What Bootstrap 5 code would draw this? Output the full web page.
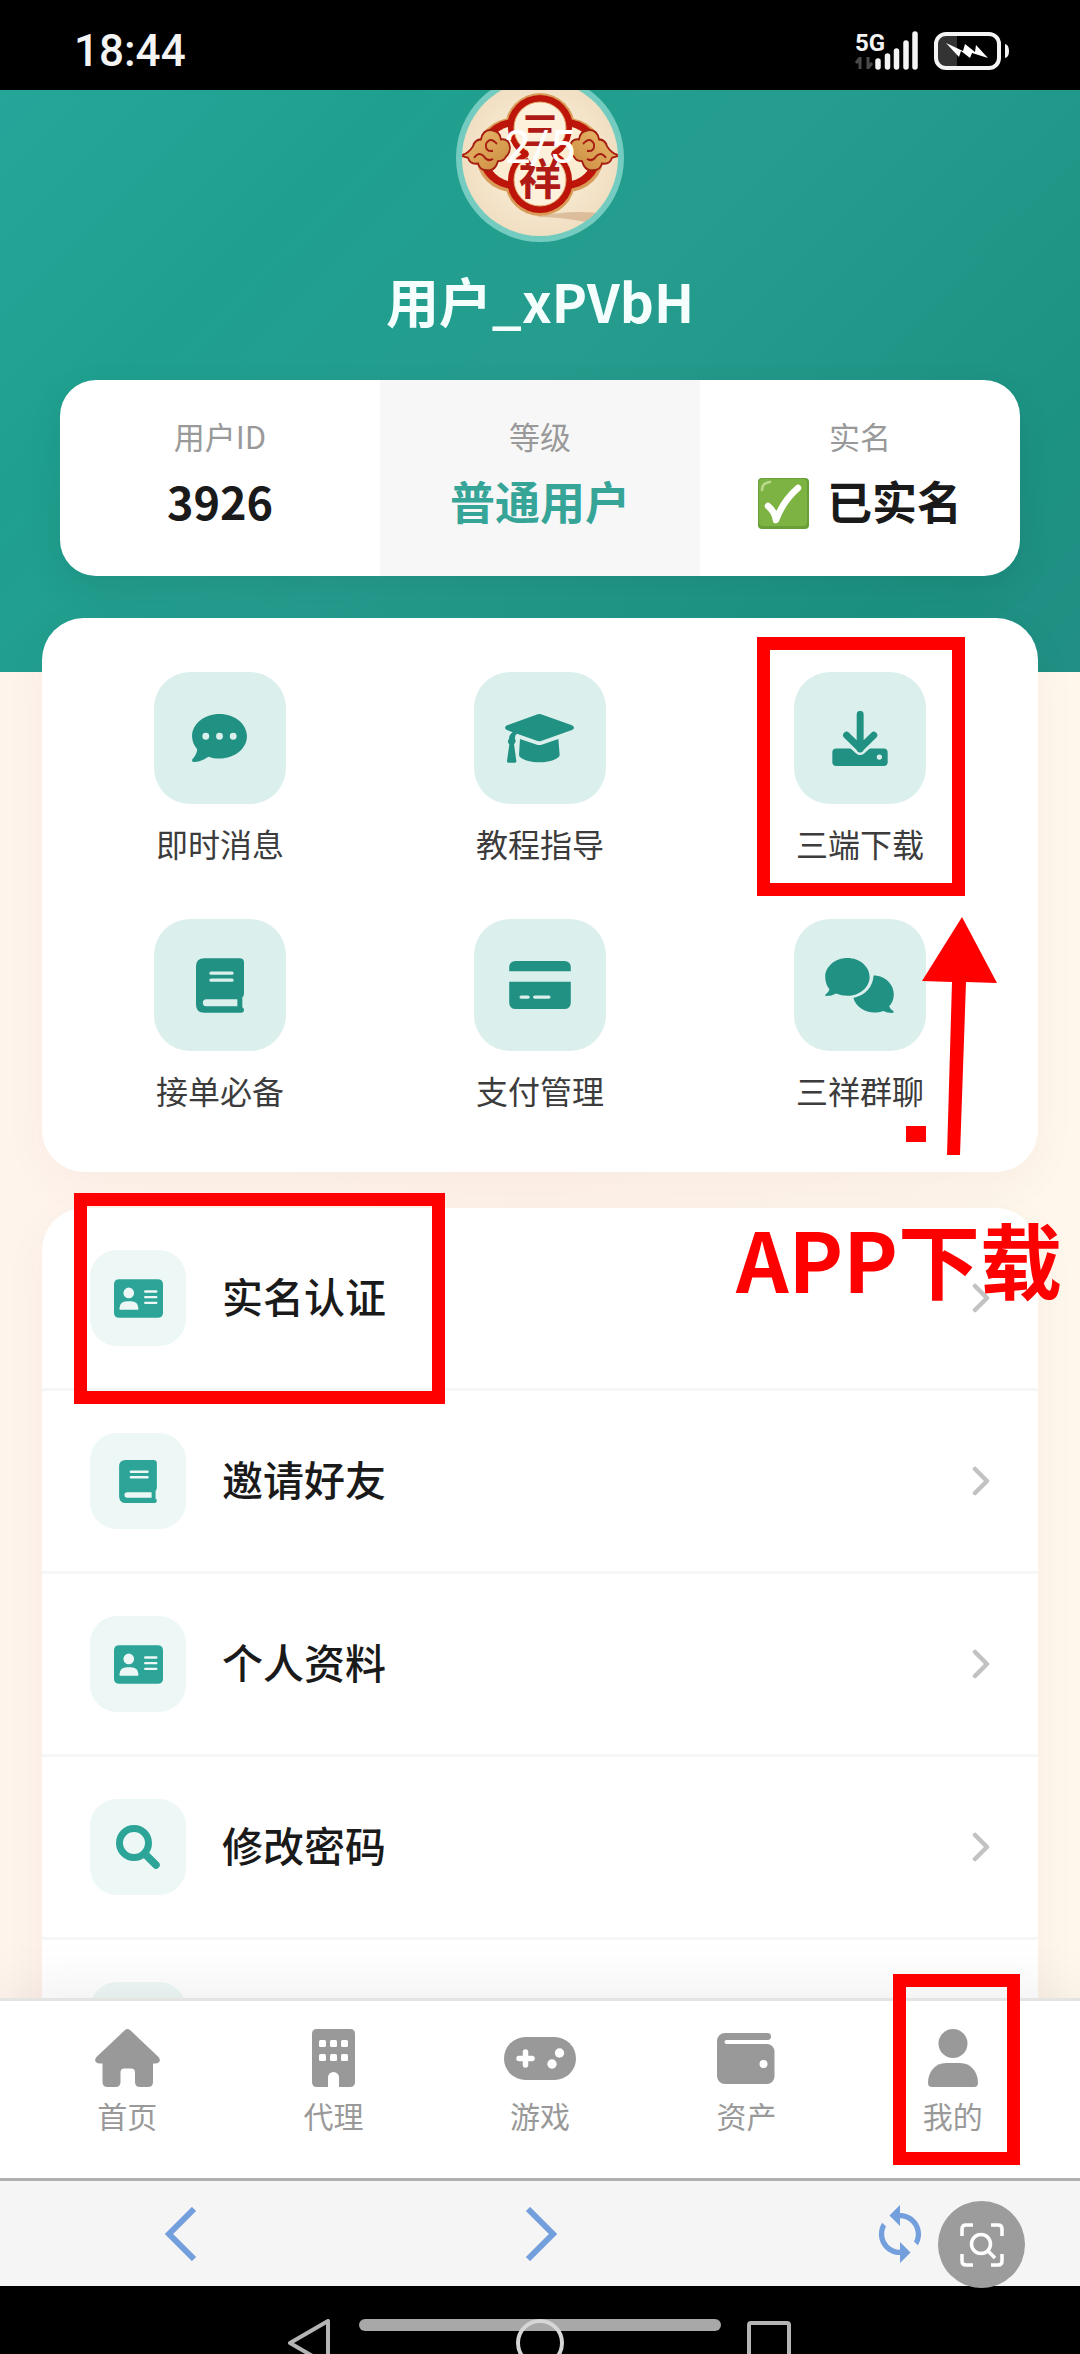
<!DOCTYPE html>
<html lang="zh-CN">
<head>
<meta charset="utf-8">
<meta name="viewport" content="width=device-width, initial-scale=1">
<title>我的</title>
<link href="https://cdn.jsdelivr.net/npm/bootstrap@5.3.0/dist/css/bootstrap.min.css" rel="stylesheet">
<style>
  body { font-family: "Noto Sans CJK SC", "Noto Sans", sans-serif; background: #000; color: #1a1a1a; }
  a, a:hover { color: inherit; text-decoration: none; }
  svg { display: block; flex: none; }
  .phone { height: 100vh; }

  /* status bar */
  .status { height: 90px; background: #000; color: #f4f4f4; padding: 12px 71px 0 74px; z-index: 3; }
  .clock { font: 500 44px/48px Roboto, sans-serif; }

  /* scrolling page */
  .view { min-height: 0; overflow: hidden; background: linear-gradient(90deg, #fff4ec, #fff2e9 50%, #fff7ec); }
  .hero { background: linear-gradient(135deg, #26a69a 0%, #1fa08f 25%, #259c8e 50%, #1c9283 85%, #228f84 100%); padding: 0 60px 96px; }
  .avatar { width: 168px; height: 168px; margin-top: -16px; border-radius: 50%; }
  .page-no { top: 43px; left: 0; right: 0; font: 400 46px/60px Roboto, sans-serif; color: #fff; }
  .user-name { font-size: 53px; line-height: 60px; margin: 28px 0 50px; color: #f4fffd; font-weight: 700; }
  .stats { border-radius: 36px; height: 196px; box-shadow: 0 12px 36px rgba(0, 0, 0, .08); }
  .stat { flex: 1 1 0; padding-top: 34px; }
  .stat-mid { background: #f7f7f7; }
  .stat-label { font-size: 31px; line-height: 44px; color: #999; }
  .stat-value { font-size: 45px; line-height: 60px; margin-top: 13px; font-weight: 700; gap: 18px; }
  .stat-check { margin-top: 4px; }
  .teal-text { color: #36a497; }

  .panel { margin: 0 42px; border-radius: 42px; box-shadow: 0 12px 48px rgba(80, 30, 20, .04); }
  .menu { margin-top: -54px; padding: 54px 18px 62px; row-gap: 56px; }
  .menu-item { width: 33.3333%; color: #3c3c3c; }
  .menu-tile { width: 132px; height: 132px; border-radius: 36px; background: #dbefec; color: #219184; }
  .menu-label { font-size: 32px; line-height: 40px; margin-top: 19px; }

  .rows { margin-top: 36px; }
  .row-link { height: 183px; border-bottom: 3px solid #f5f6f6; padding: 0 48px; }
  .row-tile { width: 96px; height: 96px; border-radius: 27px; background: #edf8f6; color: #2ca498; }
  .row-text { font-size: 41px; line-height: 60px; font-weight: 500; margin-left: 36px; padding-bottom: 6px; }

  /* bottom tabs */
  .tabs { background: #fff; border-top: 3px solid #e4e4e2; padding: 27px 24px 45px; box-shadow: 0 -6px 60px rgba(0, 0, 0, .07); z-index: 2; color: #999; }
  .tab-item { flex: 1 1 0; }
  .tab-icon { height: 60px; }
  .tab-label { font-size: 30px; line-height: 36px; margin-top: 9px; }

  /* browser and system bars */
  .browser { height: 108px; background: #f5f5f5; border-top: 3px solid #b0b0b0; z-index: 3; }
  .browser button { flex: 1 1 0; border: 0; background: none; padding: 0; color: #749fdd; }
  .browser .lens { width: 87px; height: 87px; right: 55px; top: 20px; border-radius: 50%; background: #9c9c9c; }
  .system { height: 68px; background: #000; overflow: hidden; padding-top: 33px; gap: 183px; }
  .pill { width: 362px; height: 12px; border-radius: 6px; background: #a8a8a8; top: 33px; left: 50%; margin-left: -181px; }

  /* red pen marks */
  .pen-box { border: 13px solid #f00; pointer-events: none; z-index: 4; }
  .pen-download { left: 50%; margin-left: -103px; top: -35px; width: 208px; height: 259px; }
  .pen-verify { left: 32px; top: -15px; width: 371px; height: 211px; }
  .pen-mine { left: 50%; margin-left: -60px; top: -54px; width: 127px; height: 191px; }
  .pen-arrow { right: 40px; top: 298px; z-index: 4; }
  .pen-text { right: -24px; top: 2px; font-size: 82px; line-height: 96px; font-weight: 700; color: #f00; z-index: 4; }
</style>
<script src="https://cdn.jsdelivr.net/npm/bootstrap@5.3.0/dist/js/bootstrap.bundle.min.js"></script>
</head>
<body>
<svg width="0" height="0" class="position-absolute" aria-hidden="true">
  <symbol id="book" viewBox="0 0 144 164"><path fill="currentColor" fill-rule="evenodd" d="M25 0h106q13 0 13 13v92q0 9-5 12v30q5 3 5 8q0 9-9 9H25q-25 0-25-25V25Q0 0 25 0zM45 40a5 5 0 0 0 0 10h63a5 5 0 0 0 0-10zM45 61a5 5 0 0 0 0 10h63a5 5 0 0 0 0-10zM31 123a10.500 10.500 0 0 0 0 21h93v-21z"/></symbol>
  <symbol id="idcard" viewBox="0 0 146 115"><path fill="currentColor" fill-rule="evenodd" d="M16 0h114q16 0 16 16v83q0 16-16 16H16q-16 0-16-16V16Q0 0 16 0zM44 25a16 16 0 1 0 0 32a16 16 0 1 0 0-32zM16 88q0 3 3 3h51q3 0 3-3q-1-22-23-22H39q-22 0-23 22zM93 33a3.500 3.500 0 0 0 0 7h33a3.500 3.500 0 0 0 0-7zM93 50a3.500 3.500 0 0 0 0 7h33a3.500 3.500 0 0 0 0-7zM93 67a3.500 3.500 0 0 0 0 7h33a3.500 3.500 0 0 0 0-7z"/></symbol>
  <symbol id="chev" viewBox="0 0 18 30"><path d="M3 3l12 12L3 27" fill="none" stroke="#c2c2c2" stroke-width="4.500" stroke-linecap="round" stroke-linejoin="round"/></symbol>
</svg>

<div class="phone d-flex flex-column">
  <header class="status d-flex justify-content-between align-items-center position-relative flex-shrink-0">
    <span class="clock">18:44</span>
    <svg width="163" height="52" viewBox="846 25 163 52" role="img" aria-label="5G">
      <text x="855" y="51" font-family="Roboto, sans-serif" font-weight="700" font-size="24" fill="#f4f4f4">5G</text>
      <path d="M860 57v12M860 58l-4 5M868 57v12M868 68l4-5" stroke="#4a4a4a" stroke-width="3" fill="none"/>
      <path d="M878 61v6M887.500 56v11M896.500 51v16M906 43v24M915 34v33" stroke="#f4f4f4" stroke-width="5.500" stroke-linecap="round"/>
      <path d="M946 34h11v34h-11q-10 0-10-10v-14q0-10 10-10z" fill="#333"/>
      <rect x="936" y="34" width="63" height="34" rx="10" fill="none" stroke="#f4f4f4" stroke-width="4"/>
      <path d="M1005 44q4 1 4 7t-4 7z" fill="#f4f4f4"/>
      <path d="M946 43l17 8 2-7 10 8 1-7 12 13-16-5-2 5-9-7-2 6z" fill="#fff"/>
    </svg>
  </header>

  <main class="view flex-fill">
    <section class="hero text-center">
      <div class="avatar position-relative mx-auto">
        <svg width="168" height="168" viewBox="0 0 168 168" role="img" aria-label="三祥">
          <defs>
            <radialGradient id="cream"><stop offset="0" stop-color="#fdf3df"/><stop offset="1" stop-color="#f1dfc2"/></radialGradient>
            <linearGradient id="gold" x2="1" y2="1"><stop offset="0" stop-color="#eebd72"/><stop offset="1" stop-color="#c98a3d"/></linearGradient>
            <clipPath id="face"><circle cx="84" cy="84" r="78"/></clipPath>
          </defs>
          <circle cx="84" cy="84" r="84" fill="#74cbc0"/>
          <circle cx="84" cy="84" r="78" fill="url(#cream)"/>
          <g clip-path="url(#face)">
            <path d="M80 143q35-8 70-3l-20 8q-25-5-50-5z" fill="#c9a079" opacity=".55"/>
            <g fill="#d99c58"><circle cx="57" cy="81" r="37"/><circle cx="111" cy="81" r="37"/><circle cx="84" cy="54" r="35"/><circle cx="84" cy="107" r="35"/></g>
            <g fill="#bd1509"><circle cx="58" cy="80" r="35"/><circle cx="110" cy="80" r="35"/><circle cx="84" cy="54" r="33"/><circle cx="84" cy="106" r="33"/></g>
            <g fill="#fbecd2"><circle cx="59" cy="80" r="28"/><circle cx="109" cy="80" r="28"/></g>
            <g fill="#bd1509"><circle cx="84" cy="54" r="32"/><circle cx="84" cy="106" r="32"/></g>
            <g fill="#fdf1dc" stroke="#e0ad70" stroke-width="1"><circle cx="84" cy="54" r="26"/><circle cx="84" cy="106" r="26"/></g>
            <path d="M69 70h30l-4 10 4 10H69l4-10z" fill="#fdf1dc"/>
            <g id="cloud" transform="matrix(1 0 0 1.150 0 -14)" fill="url(#gold)" stroke="#a51c10" stroke-width="1.800">
              <path d="M4 83q8-1 13-8 2-6 8-6 2-9 11-8 8 1 9 8 8-1 9 7 0 5-4 8-2 4-8 4-3 9-11 8-7 0-9-6-8 1-10-5-4-1-8-2z"/>
              <path d="M41 73q-7-7-11 0-1 7 7 6M18 85q5-6 10-1 4 5 9 2" fill="none"/>
            </g>
            <use href="#cloud" transform="matrix(-1 0 0 1 168 0)"/>
            <g fill="#b01a16" font-family="Noto Sans CJK SC, sans-serif" font-weight="700" text-anchor="middle"><text x="84" y="70" font-size="38">三</text><text x="84" y="121" font-size="43">祥</text></g>
          </g>
        </svg>
        <span class="page-no position-absolute text-center">2/5</span>
      </div>
      <h1 class="user-name">用户_xPVbH</h1>
      <div class="stats d-flex bg-white overflow-hidden">
        <div class="stat"><div class="stat-label">用户ID</div><div class="stat-value">3926</div></div>
        <div class="stat stat-mid"><div class="stat-label">等级</div><div class="stat-value teal-text">普通用户</div></div>
        <div class="stat"><div class="stat-label">实名</div>
          <div class="stat-value d-flex justify-content-center align-items-center">
            <svg class="stat-check" width="51" height="51" viewBox="0 0 51 51" role="img" aria-label="✅"><rect width="51" height="51" rx="4" fill="#689f38"/><rect x="1" y="1" width="48" height="47" rx="4" fill="#7cb342"/><path d="M4 12q0-7 8-8" stroke="#b9d98f" stroke-width="2.500" fill="none" stroke-linecap="round"/><path d="M10 28q7 6 8 14Q25 23 40 10" fill="none" stroke="#fff" stroke-width="6.500" stroke-linecap="round" stroke-linejoin="round"/></svg>
            <span>已实名</span>
          </div></div>
      </div>
    </section>

    <nav class="panel menu bg-white d-flex flex-wrap position-relative">
      <a href="#" class="menu-item d-flex flex-column align-items-center">
        <span class="menu-tile d-flex align-items-center justify-content-center"><svg width="55" height="48" viewBox="0 32 512 448"><path fill="currentColor" fill-rule="evenodd" d="M256 448c141.400 0 256-93.100 256-208S397.400 32 256 32S0 125.100 0 240c0 45.100 17.700 86.800 47.700 120.900c-1.900 24.500-11.400 46.300-21.400 62.900c-5.500 9.200-11.100 16.600-15.200 21.600c-2.100 2.500-4 4.700-6.500 7.400c-4.600 4.600-5.900 11.400-3.400 17.400c2.500 6 8.300 9.900 14.800 9.900c28.700 0 57.600-8.900 81.600-19.300c22.900-10 42.400-21.900 54.300-30.600c31.800 11.500 67 17.900 104.100 17.900zM128 208a32 32 0 1 1 0 64a32 32 0 1 1 0-64zM256 208a32 32 0 1 1 0 64a32 32 0 1 1 0-64zM384 208a32 32 0 1 1 0 64a32 32 0 1 1 0-64z"/></svg></span>
        <span class="menu-label">即时消息</span>
      </a>
      <a href="#" class="menu-item d-flex flex-column align-items-center">
        <span class="menu-tile d-flex align-items-center justify-content-center"><svg width="69" height="49" viewBox="0 0 207 147" fill="currentColor"><path d="M98 1q5-2 10 0l93 33q12 7 0 14l-93 33q-5 2-10 0L36 59Q29 63 30 74q5 9-3 17l7 50q1 5-4 5H10q-5 0-4-5l7-50q-8-8-1-17Q13 61 23 55L6 48q-12-7 0-14z"/><path d="M45 75l51 17q7 2 14 0l50-17 4 48q0 3-3 6c-23 21-93 21-116 0q-3-3-3-6z"/></svg></span>
        <span class="menu-label">教程指导</span>
      </a>
      <a href="#" class="menu-item d-flex flex-column align-items-center position-relative">
        <span class="menu-tile d-flex align-items-center justify-content-center"><svg width="56" height="55" viewBox="0 0 167 166" fill="none" stroke-linecap="round" stroke-linejoin="round"><rect y="113" width="167" height="53" rx="12" fill="currentColor"/><path d="M50 84l34 31 34-31" stroke="#dbefec" stroke-width="36"/><path d="M84 10v105M43 73l41 40 41-40" stroke="currentColor" stroke-width="21"/><circle cx="142" cy="139" r="8" fill="#dbefec"/></svg></span>
        <span class="menu-label">三端下载</span>
        <span class="pen-box pen-download position-absolute"></span>
      </a>
      <a href="#" class="menu-item d-flex flex-column align-items-center">
        <span class="menu-tile d-flex align-items-center justify-content-center"><svg width="48" height="55"><use href="#book"/></svg></span>
        <span class="menu-label">接单必备</span>
      </a>
      <a href="#" class="menu-item d-flex flex-column align-items-center">
        <span class="menu-tile d-flex align-items-center justify-content-center"><svg width="62" height="48" viewBox="0 0 186 145"><path fill="currentColor" fill-rule="evenodd" d="M0 31V20Q0 0 20 0h146q20 0 20 20v11zM0 63h186v62q0 20-20 20H20q-20 0-20-20zM36 104a5 5 0 0 0 0 10h21a5 5 0 0 0 0-10zM77 104a5 5 0 0 0 0 10h43a5 5 0 0 0 0-10z"/></svg></span>
        <span class="menu-label">支付管理</span>
      </a>
      <a href="#" class="menu-item d-flex flex-column align-items-center">
        <span class="menu-tile d-flex align-items-center justify-content-center"><svg width="69" height="55" viewBox="0 0 207 166" fill="currentColor"><path d="M146 53c34 0 61 26 61 57q0 20-14 36 4 11 13 15 2 4-3 5-17 0-28-6c-38 14-80-4-90-39q57-15 61-68z"/><path d="M67 0c37 0 67 26 67 57s-30 57-67 57q-18 0-34-7-14 8-30 8-5-1-2-5 9-6 12-16Q0 78 0 57C0 26 30 0 67 0z"/></svg></span>
        <span class="menu-label">三祥群聊</span>
      </a>
      <svg class="pen-arrow position-absolute" width="92" height="240" viewBox="0 0 92 240" fill="#f00" aria-hidden="true"><path d="M56 1l35 66-31-1-6 173H41l5-173-30-1z"/><path d="M0 210h20v16H0z"/></svg>
    </nav>

    <div class="panel rows bg-white position-relative">
      <a href="#" class="row-link d-flex align-items-center"><span class="row-tile d-flex align-items-center justify-content-center"><svg width="49" height="39"><use href="#idcard"/></svg></span><span class="row-text flex-fill">实名认证</span><svg width="18" height="30"><use href="#chev"/></svg></a>
      <a href="#" class="row-link d-flex align-items-center"><span class="row-tile d-flex align-items-center justify-content-center"><svg width="38" height="43"><use href="#book"/></svg></span><span class="row-text flex-fill">邀请好友</span><svg width="18" height="30"><use href="#chev"/></svg></a>
      <a href="#" class="row-link d-flex align-items-center"><span class="row-tile d-flex align-items-center justify-content-center"><svg width="49" height="39"><use href="#idcard"/></svg></span><span class="row-text flex-fill">个人资料</span><svg width="18" height="30"><use href="#chev"/></svg></a>
      <a href="#" class="row-link d-flex align-items-center"><span class="row-tile d-flex align-items-center justify-content-center"><svg width="44" height="44" viewBox="0 0 44 44" fill="none" stroke="currentColor" stroke-linecap="round"><circle cx="18" cy="18" r="14.500" stroke-width="7"/><path d="M29 29l11 11" stroke-width="7.500"/></svg></span><span class="row-text flex-fill">修改密码</span><svg width="18" height="30"><use href="#chev"/></svg></a>
      <div class="row-link d-flex align-items-center"><span class="row-tile"></span></div>
      <span class="pen-box pen-verify position-absolute"></span>
      <span class="pen-text position-absolute text-nowrap">APP下载</span>
    </div>
  </main>

  <nav class="tabs d-flex position-relative flex-shrink-0">
    <a href="#" class="tab-item d-flex flex-column align-items-center"><span class="tab-icon d-flex align-items-center"><svg width="65" height="58" viewBox="0 0 65 58" fill="currentColor"><path d="M30 1q2.500-2 5 0l28.500 27q2 2.500 1 4.500-1 2-4 2H58V53q0 5-5 5h-8q-5 0-5-5v-9.500q0-4-4-4h-6.500q-4 0-4 4V53q0 5-5 5h-8q-5 0-5-5V34.500h-3q-3 0-4-2-1-2 1-4.500z"/></svg></span><span class="tab-label">首页</span></a>
    <a href="#" class="tab-item d-flex flex-column align-items-center"><span class="tab-icon d-flex align-items-center"><svg width="43" height="58" viewBox="0 0 43 58"><path fill="currentColor" d="M5 0h33q5 0 5 5v48q0 5-5 5H27V48.500a5.500 5.500 0 0 0-11 0V58H5q-5 0-5-5V5q0-5 5-5z"/><g fill="#fff"><rect x="7" y="11" width="7" height="7" rx="1.500"/><rect x="18" y="11" width="7" height="7" rx="1.500"/><rect x="29" y="11" width="7" height="7" rx="1.500"/><rect x="7" y="25" width="7" height="7" rx="1.500"/><rect x="18" y="25" width="7" height="7" rx="1.500"/><rect x="29" y="25" width="7" height="7" rx="1.500"/></g></svg></span><span class="tab-label">代理</span></a>
    <a href="#" class="tab-item d-flex flex-column align-items-center"><span class="tab-icon d-flex align-items-center"><svg width="72" height="43" viewBox="0 0 72 43"><rect width="72" height="43" rx="21.500" fill="currentColor"/><path d="M21.500 15v13M15 21.500h13" stroke="#fff" stroke-width="5.500" stroke-linecap="round"/><circle cx="48" cy="27" r="4.700" fill="#fff"/><circle cx="55.500" cy="16" r="4.700" fill="#fff"/></svg></span><span class="tab-label">游戏</span></a>
    <a href="#" class="tab-item d-flex flex-column align-items-center"><span class="tab-icon d-flex align-items-center"><svg width="58" height="51" viewBox="0 0 58 51"><path fill="currentColor" d="M8 0h42.500a3.500 3.500 0 0 1 0 7H9.500a2 2 0 0 0 0 4H50a7.500 7.500 0 0 1 7.500 7.500v25A7.500 7.500 0 0 1 50 51H8a8 8 0 0 1-8-8V8a8 8 0 0 1 8-8z"/><circle cx="46.500" cy="31" r="4" fill="#fff"/></svg></span><span class="tab-label">资产</span></a>
    <a href="#" class="tab-item d-flex flex-column align-items-center position-relative"><span class="tab-icon d-flex align-items-center"><svg width="50" height="58" viewBox="0 0 50 58" fill="currentColor"><circle cx="25" cy="14.500" r="14.500"/><path d="M18 34h14c11 0 18 9 18 20q0 4-4 4H4q-4 0-4-4c0-11 7-20 18-20z"/></svg></span><span class="tab-label">我的</span><span class="pen-box pen-mine position-absolute"></span></a>
  </nav>

  <div class="browser d-flex position-relative flex-shrink-0">
    <button type="button" class="d-flex align-items-center justify-content-center" aria-label="后退"><svg width="34" height="54" viewBox="0 0 34 54"><path d="M31 2L6 27l25 25" fill="none" stroke="currentColor" stroke-width="6"/></svg></button>
    <button type="button" class="d-flex align-items-center justify-content-center" aria-label="前进"><svg width="34" height="54" viewBox="0 0 34 54"><path d="M5 2l25 25L5 52" fill="none" stroke="currentColor" stroke-width="6"/></svg></button>
    <button type="button" class="d-flex align-items-center justify-content-center" aria-label="刷新"><svg width="58" height="58" viewBox="1 1 22 22" fill="currentColor"><path d="M12 4V1L8 5l4 4V6c3.310 0 6 2.690 6 6 0 1.010-.25 1.970-.7 2.800l1.460 1.460C19.540 15.030 20 13.570 20 12c0-4.420-3.580-8-8-8zm0 14c-3.310 0-6-2.690-6-6 0-1.010.25-1.970.7-2.800L5.240 7.740C4.460 8.970 4 10.430 4 12c0 4.420 3.580 8 8 8v3l4-4-4-4v3z"/></svg></button>
    <button type="button" class="lens position-absolute d-flex align-items-center justify-content-center" aria-label="识图"><svg width="44" height="44" viewBox="0 0 44 44" fill="none" stroke="#fff" stroke-width="3.500"><path d="M2 13V6q0-4 4-4h7M31 2h7q4 0 4 4v7M42 31v7q0 4-4 4h-7M13 42H6q-4 0-4-4v-7"/><circle cx="21" cy="21" r="9.500"/><path d="M28 28l7 7"/></svg></button>
  </div>

  <div class="system d-flex justify-content-center position-relative flex-shrink-0">
    <span class="pill position-absolute"></span>
    <svg width="48" height="48" viewBox="0 0 48 48"><path d="M43 2v44L5 24z" fill="none" stroke="#b4b4b4" stroke-width="4" stroke-linejoin="round"/></svg>
    <svg class="position-relative" width="48" height="48" viewBox="0 0 48 48"><circle cx="24" cy="24" r="22" fill="none" stroke="#d6d6d6" stroke-width="4"/></svg>
    <svg width="48" height="48" viewBox="0 0 48 48"><rect x="2" y="4" width="40" height="40" rx="2" fill="none" stroke="#b4b4b4" stroke-width="4"/></svg>
  </div>
</div>
</body>
</html>
